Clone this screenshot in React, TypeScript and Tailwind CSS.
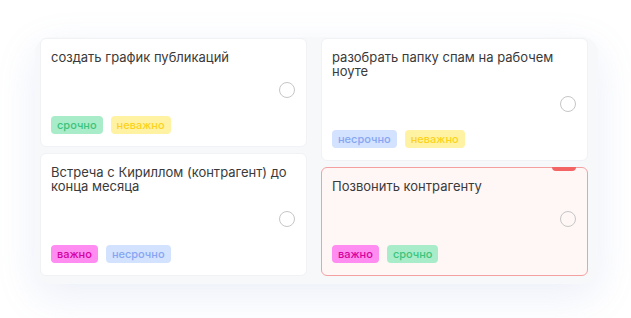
type Tag = "срочно" | "несрочно" | "важно" | "неважно";

type Task = {
  title: string;
  tags: Tag[];
  overdue?: boolean;
};

const tagStyles: Record<Tag, string> = {
  срочно: "bg-[#a9ecc9] text-[#3cc47c]",
  несрочно: "bg-[#d3e2ff] text-[#86a6f2]",
  важно: "bg-[#ff8cf0] text-[#d4009f]",
  неважно: "bg-[#fff2a3] text-[#fcd21c]",
};

const leftColumn: Task[] = [
  { title: "создать график публикаций", tags: ["срочно", "неважно"] },
  { title: "Встреча с Кириллом (контрагент) до конца месяца", tags: ["важно", "несрочно"] },
];

const rightColumn: Task[] = [
  { title: "разобрать папку спам на рабочем ноуте", tags: ["несрочно", "неважно"] },
  { title: "Позвонить контрагенту", tags: ["важно", "срочно"], overdue: true },
];

function TaskCard({ task }: { task: Task }) {
  return (
    <div
      className={`relative flex flex-col rounded-md border px-[10px] pt-[11px] pb-[12px] ${
        task.overdue ? "bg-[#fff6f6] border-[#f5a0a0]" : "bg-white border-[#f0f2f5]"
      }`}
    >
      {task.overdue && (
        <div className="absolute -top-px right-[11px] h-[4px] w-[24px] rounded-b-md bg-[#f36464]" />
      )}
      <p className="text-[13px] leading-[14px] text-[#3a3a3a]">{task.title}</p>
      <div className="flex justify-end mt-[18px] pr-[1px]">
        <span className="h-4 w-4 rounded-full border-[1.5px] border-[#c6c6c6]" />
      </div>
      <div className="flex gap-2 mt-[18px]">
        {task.tags.map((tag) => (
          <span
            key={tag}
            className={`h-[18px] px-[6px] rounded-[4px] text-[11px] leading-[18px] font-medium ${tagStyles[tag]}`}
          >
            {tag}
          </span>
        ))}
      </div>
    </div>
  );
}

export default function App() {
  return (
    <div
      className="min-h-screen w-full bg-white flex items-start justify-start"
      style={{ fontFamily: "Inter, 'Noto Sans', sans-serif" }}
    >
      <div className="ml-[35px] mt-[37px] w-[563px] rounded-2xl bg-[#f7f8fa] pl-[5px] pr-[10px] pt-[1px] pb-[8px] shadow-[0_12px_40px_rgba(120,145,210,0.14)]">
        <div className="flex gap-[14px]">
          <div className="flex flex-col gap-[6px] w-[267px]">
            {leftColumn.map((t) => (
              <TaskCard key={t.title} task={t} />
            ))}
          </div>
          <div className="flex flex-col gap-[6px] w-[267px]">
            {rightColumn.map((t) => (
              <TaskCard key={t.title} task={t} />
            ))}
          </div>
        </div>
      </div>
    </div>
  );
}
